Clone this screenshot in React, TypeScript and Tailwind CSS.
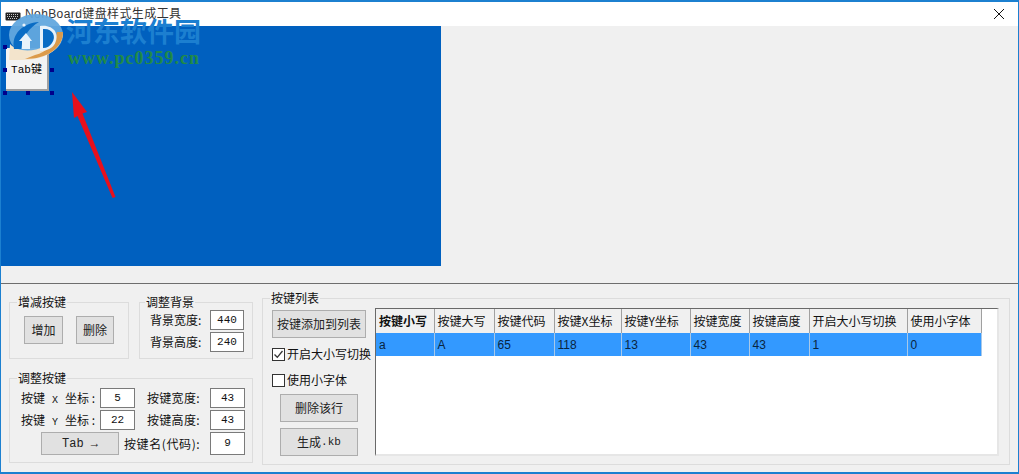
const sans = "font-['Noto_Sans_CJK_SC','Liberation_Sans',sans-serif]";
const mono = "font-['Liberation_Mono',monospace]";

const columns = [
  { title: "按键小写", width: 58, value: "a" },
  { title: "按键大写", width: 60, value: "A" },
  { title: "按键代码", width: 60, value: "65" },
  { title: "按键X坐标", width: 67, value: "118" },
  { title: "按键Y坐标", width: 69, value: "13" },
  { title: "按键宽度", width: 59, value: "43" },
  { title: "按键高度", width: 60, value: "43" },
  { title: "开启大小写切换", width: 98, value: "1" },
  { title: "使用小字体", width: 74, value: "0" },
];

const handles = [
  "left-[2px] top-[19px]",
  "left-[25px] top-[19px]",
  "left-[49px] top-[19px]",
  "left-[2px] top-[42px]",
  "left-[49px] top-[42px]",
  "left-[2px] top-[65px]",
  "left-[25px] top-[65px]",
  "left-[49px] top-[65px]",
];

function Group({ title, className, legendClass = "ml-[7px]", children }: { title: string; className: string; legendClass?: string; children: React.ReactNode }) {
  return (
    <fieldset className={`border border-[#dcdcdc] ${className}`}>
      <legend className={`${legendClass} px-[1px] text-[12px] leading-[16px]`}>{title}</legend>
      {children}
    </fieldset>
  );
}

function Button({ className, children }: { className: string; children: React.ReactNode }) {
  return (
    <button className={`flex items-center justify-center border border-[#adadad] bg-[#e1e1e1] text-[12px] text-[#222] ${className}`}>
      {children}
    </button>
  );
}

function Field({ value, className = "" }: { value: string; className?: string }) {
  return (
    <div className={`flex h-[20px] items-center justify-center border border-[#7a7a7a] bg-white ${mono} text-[11px] ${className}`}>
      {value}
    </div>
  );
}

function Check({ label, checked, className }: { label: string; checked?: boolean; className: string }) {
  return (
    <div className={`flex items-center gap-[2px] whitespace-nowrap text-[12px] ${className}`}>
      <div className="flex h-[13px] w-[13px] items-center justify-center border border-[#333] bg-white">
        {checked && (
          <svg width="11" height="11" viewBox="0 0 11 11" fill="none" stroke="#333" strokeWidth="1.3">
            <path d="M1.5 5.5 L4.3 8.3 L9.5 2" />
          </svg>
        )}
      </div>
      <span>{label}</span>
    </div>
  );
}

function Watermark() {
  return (
    <div className="pointer-events-none absolute left-0 top-0 h-[70px] w-[210px]">
      <svg className="absolute left-0 top-0" width="70" height="62" viewBox="0 0 70 62">
        <ellipse cx="35" cy="33" rx="27" ry="21" fill="#62a8de" opacity="0.95" />
        <path d="M9 42 C18 52 44 52 62 30 C62 46 46 58 22 58 L8 58 Z" fill="#f3e4cc" />
        <path d="M62 30 C62 46 46 57 24 57 L34 53 C46 50 54 42 56 30 Z" fill="#dc9a4a" />
        <path d="M13 47 C10 32 22 21 38 20 C28 26 22 34 20 47 Z" fill="#0a6cc4" />
        <path d="M25 31 L31 39 L29 39 L29 47 L21 47 L21 39 L18 39 Z" fill="#e8f2fa" />
        <path d="M39 24 C52 22 60 32 53 43 C50 47 44 49 39 49 Z" fill="#e8f2fa" />
        <path d="M42 27 C51 26 56 34 51 41 C49 44 46 46 42 46 Z" fill="#0a6cc4" />
        <circle cx="23" cy="23" r="1.6" fill="#e8f2fa" />
      </svg>
      <div className="absolute left-[65px] top-[11px] whitespace-nowrap font-['Noto_Sans_CJK_SC',sans-serif] text-[27px] font-bold leading-[36px] text-[#1c7fd0]">
        河东软件园
      </div>
      <div className="absolute left-[67px] top-[45px] whitespace-nowrap font-['Liberation_Serif',serif] text-[18px] font-bold leading-[22px] tracking-[1px] text-[#208a48]">
        www.pc0359.cn
      </div>
    </div>
  );
}

export default function App() {
  return (
    <div className={`relative flex h-[474px] w-[1019px] flex-col overflow-hidden border border-t-2 border-b-2 border-[#1c80d0] bg-[#f0f0f0] text-[#111] ${sans}`}>
      <div className="flex h-[24px] shrink-0 items-center bg-white pl-[4px] pr-[13px]">
        <svg width="16" height="10" viewBox="0 0 16 10" className="mt-[3px]">
          <rect x="0.5" y="1.5" width="15" height="8" rx="1" fill="#222" />
          <path d="M2 3.5h12M2 5.5h12M3 7.5h10" stroke="#ddd" strokeWidth="0.9" strokeDasharray="1 1" />
        </svg>
        <span className="ml-[4px] font-['Liberation_Sans','Noto_Sans_CJK_SC',sans-serif] text-[12px] leading-none tracking-[0.4px] text-[#333]">NohBoard键盘样式生成工具</span>
        <svg width="12" height="12" viewBox="0 0 12 12" className="ml-auto" stroke="#111" strokeWidth="1">
          <path d="M1 1 L11 11 M11 1 L1 11" />
        </svg>
      </div>

      <div className="h-[258px] shrink-0 border-b border-[#6d6d6d]">
        <div className="relative h-[240px] w-[440px] bg-[#0060bf]">
          <div className="absolute left-[5px] top-[22px] flex h-[43px] w-[43px] items-center justify-center border-b-2 border-r-2 border-[#a0a0a0] bg-[#f3f3f3] pt-[3px] font-['Liberation_Mono','Noto_Sans_CJK_SC',monospace] text-[11px] text-black">
            Tab键
          </div>
          {handles.map((h) => (
            <div key={h} className={`absolute h-[4px] w-[4px] bg-[#00008b] ${h}`} />
          ))}
          <svg className="absolute left-[60px] top-[60px]" width="60" height="115" viewBox="0 0 60 115">
            <path d="M11 6 L26 26 L21.5 27.5 L54.5 111 L51.5 112 L16.5 30 L13 32 Z" fill="#e8101c" />
          </svg>
        </div>
      </div>

      <div className="flex flex-1 gap-[9px] pl-[8px] pt-[10px]">
        <div className="flex w-[244px] flex-col gap-[11px]">
          <div className="flex gap-[10px]">
            <Group title="增减按键" className="h-[65px] w-[120px]">
              <div className="flex gap-[13px] pl-[14px] pt-[6px]">
                <Button className="h-[28px] w-[39px]">增加</Button>
                <Button className="h-[28px] w-[38px]">删除</Button>
              </div>
            </Group>
            <Group title="调整背景" legendClass="ml-[5px]" className="h-[65px] w-[114px]">
              <div className="flex flex-col gap-[2px] pt-[0px]">
                <div className="flex items-center pl-[10px] text-[12px]">
                  <span className="w-[60px]">背景宽度:</span>
                  <Field value="440" className="w-[34px]" />
                </div>
                <div className="flex items-center pl-[10px] text-[12px]">
                  <span className="w-[60px]">背景高度:</span>
                  <Field value="240" className="w-[34px]" />
                </div>
              </div>
            </Group>
          </div>
          <Group title="调整按键" className="h-[93px] w-[244px]">
            <div className="flex flex-col gap-[2px] pl-[11px] pt-[2px] text-[12px]">
              <div className="flex items-center">
                <span className="w-[79px] whitespace-nowrap">按键<span className={`px-[7px] ${mono} text-[10px]`}>X</span>坐标 :</span>
                <Field value="5" className="w-[35px]" />
                <span className="ml-[12px] w-[63px] tracking-[0.3px]">按键宽度:</span>
                <Field value="43" className="w-[35px]" />
              </div>
              <div className="flex items-center">
                <span className="w-[79px] whitespace-nowrap">按键<span className={`px-[7px] ${mono} text-[10px]`}>Y</span>坐标 :</span>
                <Field value="22" className="w-[35px]" />
                <span className="ml-[12px] w-[63px] tracking-[0.3px]">按键高度:</span>
                <Field value="43" className="w-[35px]" />
              </div>
              <div className="flex items-center">
                <Button className={`ml-[20px] h-[23px] w-[78px] ${mono} text-[11px]`}>Tab →</Button>
                <span className="ml-[5px] w-[86px] whitespace-nowrap tracking-[0.6px]">按键名(代码):</span>
                <Field value="9" className="h-[23px] w-[35px]" />
              </div>
            </div>
          </Group>
        </div>

        <Group title="按键列表" className="-mt-[4px] h-[175px] w-[748px]">
          <div className="flex pl-[9px] pt-[2px]">
            <div className="w-[103px] shrink-0 pt-[2px]">
              <Button className="h-[28px] w-[94px]">按键添加到列表</Button>
              <Check label="开启大小写切换" checked className="mt-[7px]" />
              <Check label="使用小字体" className="mt-[8px]" />
              <Button className="ml-[8px] mt-[5px] h-[28px] w-[78px]">删除该行</Button>
              <Button className="ml-[8px] mt-[6px] h-[28px] w-[78px]">
                生成<span className={`${mono} text-[11px]`}>.kb</span>
              </Button>
            </div>
            <div className="h-[148px] w-[624px] border border-b-2 border-r-2 border-l-[#696969] border-t-[#696969] border-b-[#e6e6e6] border-r-[#e6e6e6] bg-white">
              <table className="table-fixed border-collapse text-[12px]">
                <thead>
                  <tr>
                    {columns.map((c, i) => (
                      <th
                        key={c.title}
                        style={{ width: c.width }}
                        className={`h-[24px] whitespace-nowrap border-r border-[#a0a0a0] bg-[#f0f0f0] pl-[3px] text-left ${i === 0 ? "font-bold" : "font-normal"}`}
                      >
                        {c.title}
                      </th>
                    ))}
                  </tr>
                </thead>
                <tbody>
                  <tr>
                    {columns.map((c) => (
                      <td
                        key={c.title}
                        className="h-[23px] border-r border-[#a8c8e8] bg-[#3399ff] pl-[3px] font-['Liberation_Sans',sans-serif] text-[12px] text-[#0a2540]"
                      >
                        {c.value}
                      </td>
                    ))}
                  </tr>
                </tbody>
              </table>
            </div>
          </div>
        </Group>
      </div>

      <Watermark />
    </div>
  );
}
